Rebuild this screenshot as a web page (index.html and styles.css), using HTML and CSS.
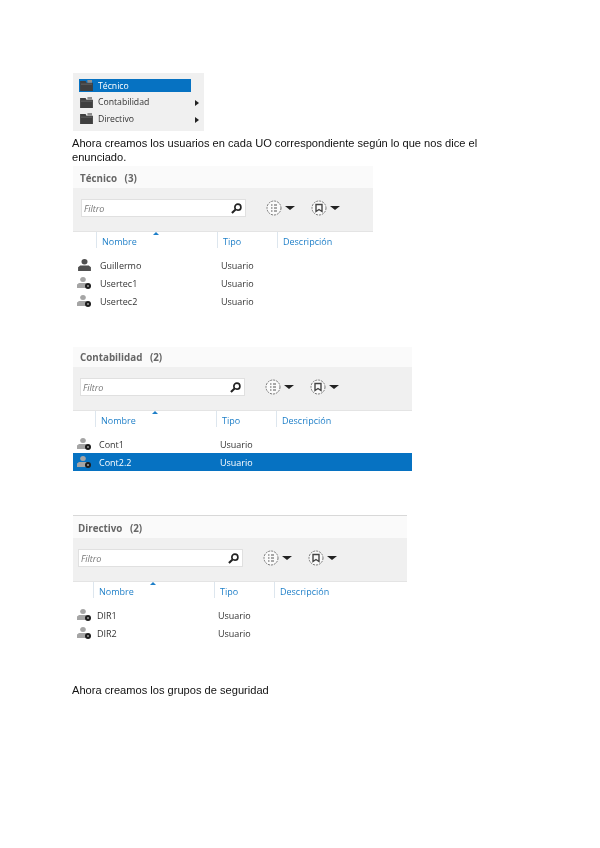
FILE: index.html
```html
<!DOCTYPE html>
<html lang="es">
<head>
<meta charset="utf-8">
<title>Usuarios</title>
<link rel="stylesheet" href="styles.css">
</head>
<body>
<svg class="defs" width="0" height="0" aria-hidden="true">
  <symbol id="folder" viewBox="0 0 14 12"><path d="M0 1h6l1 2h7v9H0z" fill="#3f3f3f"/><path d="M8 0h5v3H8z" fill="#8f8f8f"/><path d="M1 4h12v1H1z" fill="#666"/></symbol>
  <symbol id="user" viewBox="0 0 14 11"><ellipse cx="7" cy="2.500" rx="2.800" ry="2.500" fill="#4f4f4f"/><path d="M1 11V7.500L3 6h8l2 1.500V11z" fill="#4f4f4f"/></symbol>
  <symbol id="userd" viewBox="0 0 15 12"><ellipse cx="6" cy="2.500" rx="2.800" ry="2.500" fill="#a5a5a5"/><path d="M0 11V7.500L2 6h7l2 1.500V11z" fill="#a5a5a5"/><circle cx="11" cy="9" r="3" fill="#1c1c1c"/><path d="M10 9h2" stroke="#ddd"/></symbol>
  <symbol id="search" viewBox="0 0 12 12"><circle cx="7.500" cy="4.500" r="3.300" fill="none" stroke="#222" stroke-width="1.800"/><path d="M5 7l-4 4" stroke="#222" stroke-width="2.200"/></symbol>
  <symbol id="btn1" viewBox="0 0 16 16"><circle cx="8" cy="8" r="7" fill="#fafafa" stroke="#777" stroke-dasharray="2 1"/><path d="M5 5h1.500M5 8h1.500M5 11h1.500M8 5h3M8 8h3M8 11h3" stroke="#555" stroke-width="1.200"/></symbol>
  <symbol id="btn2" viewBox="0 0 16 16"><circle cx="8" cy="8" r="7" fill="#fafafa" stroke="#777" stroke-dasharray="2 1"/><path d="M5 4.500h6v7L8 9.500l-3 2z" fill="none" stroke="#444" stroke-width="1.400"/></symbol>
</svg>

<main class="page">
  <div class="menu">
    <div class="menu-item is-current"><svg class="folder"><use href="#folder"/></svg><span>Técnico</span></div>
    <div class="menu-item"><svg class="folder"><use href="#folder"/></svg><span>Contabilidad</span><i class="arrow"></i></div>
    <div class="menu-item"><svg class="folder"><use href="#folder"/></svg><span>Directivo</span><i class="arrow"></i></div>
  </div>

  <p class="copy copy-first">Ahora creamos los usuarios en cada UO correspondiente según lo que nos dice el enunciado.</p>

  <section class="panel panel-tec">
    <h2 class="panel-title">Técnico <span class="count">(3)</span></h2>
    <div class="toolbar">
      <div class="filter"><span>Filtro</span><svg class="search"><use href="#search"/></svg></div>
      <div class="tool"><svg class="round"><use href="#btn1"/></svg><i class="caret"></i></div>
      <div class="tool"><svg class="round"><use href="#btn2"/></svg><i class="caret"></i></div>
    </div>
    <div class="cols head"><span></span><span class="sorted">Nombre</span><span>Tipo</span><span>Descripción</span></div>
    <div class="rows">
      <div class="cols row"><svg class="uicon"><use href="#user"/></svg><span>Guillermo</span><span>Usuario</span></div>
      <div class="cols row"><svg class="uicon"><use href="#userd"/></svg><span>Usertec1</span><span>Usuario</span></div>
      <div class="cols row"><svg class="uicon"><use href="#userd"/></svg><span>Usertec2</span><span>Usuario</span></div>
    </div>
  </section>

  <section class="panel panel-con">
    <h2 class="panel-title">Contabilidad <span class="count">(2)</span></h2>
    <div class="toolbar">
      <div class="filter"><span>Filtro</span><svg class="search"><use href="#search"/></svg></div>
      <div class="tool"><svg class="round"><use href="#btn1"/></svg><i class="caret"></i></div>
      <div class="tool"><svg class="round"><use href="#btn2"/></svg><i class="caret"></i></div>
    </div>
    <div class="cols head"><span></span><span class="sorted">Nombre</span><span>Tipo</span><span>Descripción</span></div>
    <div class="rows">
      <div class="cols row"><svg class="uicon"><use href="#userd"/></svg><span>Cont1</span><span>Usuario</span></div>
      <div class="cols row is-selected"><svg class="uicon"><use href="#userd"/></svg><span>Cont2.2</span><span>Usuario</span></div>
    </div>
  </section>

  <section class="panel panel-dir">
    <h2 class="panel-title">Directivo <span class="count">(2)</span></h2>
    <div class="toolbar">
      <div class="filter"><span>Filtro</span><svg class="search"><use href="#search"/></svg></div>
      <div class="tool"><svg class="round"><use href="#btn1"/></svg><i class="caret"></i></div>
      <div class="tool"><svg class="round"><use href="#btn2"/></svg><i class="caret"></i></div>
    </div>
    <div class="cols head"><span></span><span class="sorted">Nombre</span><span>Tipo</span><span>Descripción</span></div>
    <div class="rows">
      <div class="cols row"><svg class="uicon"><use href="#userd"/></svg><span>DIR1</span><span>Usuario</span></div>
      <div class="cols row"><svg class="uicon"><use href="#userd"/></svg><span>DIR2</span><span>Usuario</span></div>
    </div>
  </section>

  <p class="copy copy-last">Ahora creamos los grupos de seguridad</p>
</main>
</body>
</html>
```

FILE: styles.css
```css
* { box-sizing: border-box; }
html, body { margin: 0; background: #fff; }
.defs { display: block; height: 0; }
.page { padding: 73px 0 0 72px; width: 600px; height: 848px; overflow: hidden; font-family: "Liberation Sans", Arial, sans-serif; color: #111; }

.menu { margin-left: 1px; width: 131px; height: 58px; background: #f0f0f0; padding: 6px 0 0 6px; font: 8.700px "Open Sans", sans-serif; color: #333; filter: blur(.6px); }
.menu-item { position: relative; width: 112px; height: 16.500px; display: flex; align-items: center; gap: 5px; padding-left: 1px; }
.menu-item.is-current { height: 13px; margin-bottom: 2px; background: #0672c2; color: #fff; }
.folder { width: 13px; height: 11px; flex: none; }
.arrow { position: absolute; right: -8px; top: 6px; border-left: 4px solid #222; border-top: 3px solid transparent; border-bottom: 3px solid transparent; }

.copy { margin: 0; font-size: 11.100px; line-height: 14px; width: 410px; filter: blur(.3px); }
.copy-first { margin-top: 5px; }
.copy-last { margin-top: 41px; }

.panel { margin-left: 1px; background: #fff; filter: blur(.6px); }
.panel-tec { width: 300px; margin-top: 2px; --inset: 8px; --c1: 23px; --title: 7px; }
.panel-con { width: 339px; margin-top: 37px; --inset: 7px; --c1: 22px; --title: 7px; }
.panel-dir { width: 334px; margin-top: 44px; --inset: 5px; --c1: 20px; --title: 5px; border-top: 1px solid #d8d8d8; }

.panel-title { margin: 0; height: 22px; padding-left: var(--title); background: #fafafa; font: 700 9.800px/25px "Open Sans", sans-serif; color: #666; }
.count { margin-left: 5px; }
.panel-con .panel-title { height: 20px; line-height: 22px; }

.toolbar { height: 44px; background: #f0f0f0; border-bottom: 1px solid #e4e4e4; display: flex; align-items: flex-start; padding: 11px 0 0 var(--inset); }
.filter { width: 165px; height: 18px; background: #fff; border: 1px solid #e0e0e0; display: flex; align-items: center; justify-content: space-between; padding: 0 3px 0 2px; font: italic 9px "Open Sans", sans-serif; color: #777; margin-right: 20px; }
.search { width: 11px; height: 11px; }
.tool { display: flex; align-items: center; height: 18px; width: 45px; gap: 3px; }
.round { width: 16px; height: 16px; }
.caret { border-top: 4px solid #222; border-left: 5px solid transparent; border-right: 5px solid transparent; }

.cols { display: grid; grid-template-columns: var(--c1) 121px 60px 1fr; align-items: center; }
.head { height: 16px; font: 9px "Open Sans", sans-serif; color: #1e7fc8; }
.head span { position: relative; height: 16px; line-height: 20px; padding-left: 5px; border-left: 1px solid #dde6ee; }
.head span:first-child { border-left: 0; padding: 0; }
.sorted::after { content: ""; position: absolute; left: 56px; top: 0; border-bottom: 3px solid #1e7fc8; border-left: 3px solid transparent; border-right: 3px solid transparent; }

.rows { padding-top: 8px; }
.row { height: 18px; font: 9px "Open Sans", sans-serif; color: #333; }
.row span { padding-left: 4px; }
.uicon { width: 15px; height: 12px; margin-left: 4px; }
.is-selected { background: #0672c2; color: #fff; }
```
